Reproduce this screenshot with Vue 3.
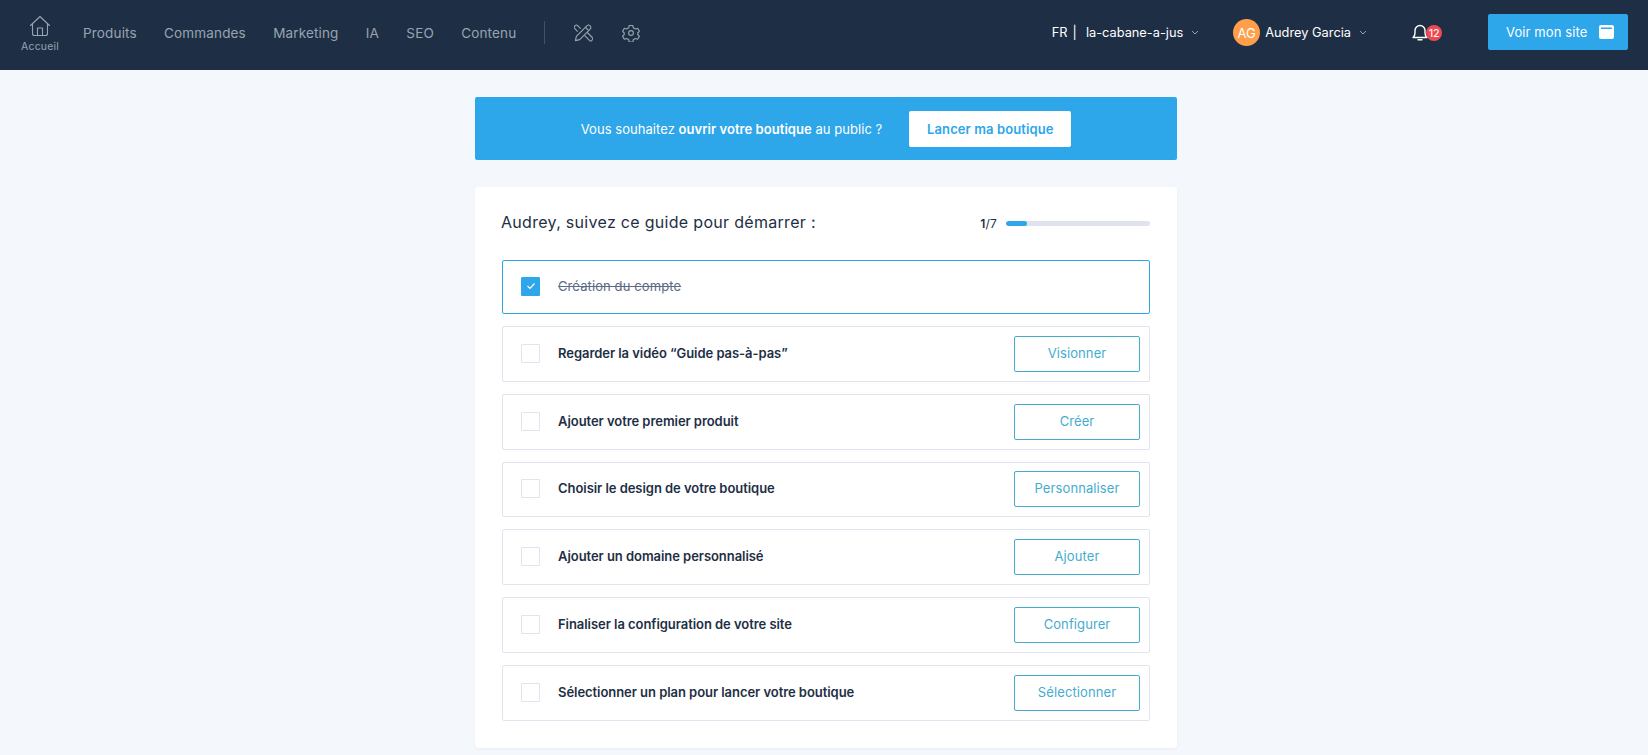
<script setup>
const navLinks = ['Produits', 'Commandes', 'Marketing', 'IA', 'SEO', 'Contenu']

const steps = [
  { label: 'Regarder la vidéo “Guide pas-à-pas”', action: 'Visionner' },
  { label: 'Ajouter votre premier produit', action: 'Créer' },
  { label: 'Choisir le design de votre boutique', action: 'Personnaliser' },
  { label: 'Ajouter un domaine personnalisé', action: 'Ajouter' },
  { label: 'Finaliser la configuration de votre site', action: 'Configurer' },
  { label: 'Sélectionner un plan pour lancer votre boutique', action: 'Sélectionner' }
]
</script>

<template>
  <div class="page">
    <header class="topbar">
      <div class="nav-left">
        <a class="home">
          <svg width="22" height="22" viewBox="0 0 22 22" fill="none" stroke="currentColor" stroke-width="1.1" stroke-linejoin="round" stroke-linecap="round">
            <path d="M1.5 10.5 11 1.5l9.5 9" />
            <path d="M3.5 9v9.5a2 2 0 0 0 2 2h11a2 2 0 0 0 2-2V9" />
            <path d="M8.5 20.5V13h5v7.5" />
          </svg>
          <span>Accueil</span>
        </a>
        <a v-for="link in navLinks" :key="link" class="nav-link">{{ link }}</a>
        <span class="divider"></span>
        <svg class="tool-icon" width="19" height="19" viewBox="0 0 20 20" fill="none" stroke="currentColor" stroke-width="1.2" stroke-linejoin="round">
          <path d="M1.5 18.5l1-4.500L13.500 3a2.400 2.400 0 0 1 3.500 3.500L6 17.500z" />
          <path d="M12 4.500 15.500 8" />
          <path d="M7 6 3.600 2.600a1.400 1.400 0 0 0-2 0l-1 1a1.400 1.400 0 0 0 0 2L4 9" />
          <path d="M11 13l3.500 3.500 2 2a1.400 1.400 0 0 0 2 0l1-1a1.400 1.400 0 0 0 0-2L14 10" />
        </svg>
        <svg class="gear-icon" width="18" height="18" viewBox="0 0 24 24" fill="none" stroke="currentColor" stroke-width="1.5" stroke-linejoin="round">
          <circle cx="12" cy="12" r="3.200" />
          <path d="M9.600 2h4.800l.7 3 2.800 1.600 3-.9 2.300 4.100-2.200 2.200v2l2.200 2.200-2.300 4.100-3-.9-2.800 1.600-.7 3H9.600l-.7-3-2.800-1.600-3 .9-2.300-4.100 2.200-2.200v-2L.8 9.800l2.300-4.100 3 .9 2.800-1.600z" />
        </svg>
      </div>

      <div class="nav-right">
        <div class="shop">
          <span>FR</span>
          <span class="shop-sep">|</span>
          <span>la-cabane-a-jus</span>
          <svg class="chevron" width="8" height="5" viewBox="0 0 8 5" fill="none" stroke="currentColor"><path d="M1 1l3 3 3-3" /></svg>
        </div>
        <div class="user">
          <span class="avatar">AG</span>
          <span>Audrey Garcia</span>
          <svg class="chevron" width="8" height="5" viewBox="0 0 8 5" fill="none" stroke="currentColor"><path d="M1 1l3 3 3-3" /></svg>
        </div>
        <div class="bell">
          <svg width="16" height="17" viewBox="0 0 16 17" fill="none" stroke="#fff" stroke-width="1.4" stroke-linejoin="round">
            <path d="M1 13.500c1.300-1 2-2.200 2-4.500V6.500a5 5 0 0 1 10 0V9c0 2.300.7 3.500 2 4.500z" />
            <path d="M6 15.800h4" stroke-linecap="round" />
          </svg>
          <span class="badge">12</span>
        </div>
        <a class="site-btn">
          Voir mon site
          <svg width="15" height="14" viewBox="0 0 15 14"><path fill="#fff" fill-rule="evenodd" d="M2 0h11a2 2 0 0 1 2 2v10a2 2 0 0 1-2 2H2a2 2 0 0 1-2-2V2a2 2 0 0 1 2-2zm0 2.500V4h11V2.500z" /></svg>
        </a>
      </div>
    </header>

    <main class="content">
      <section class="banner">
        <p>Vous souhaitez <strong>ouvrir votre boutique</strong> au public ?</p>
        <button class="launch">Lancer ma boutique</button>
      </section>

      <section class="card">
        <div class="card-head">
          <h1>Audrey, suivez ce guide pour démarrer :</h1>
          <div class="progress">
            <span class="count"><b>1</b>/7</span>
            <div class="track"><div class="fill" :style="{ width: (100 / 7) + '%' }"></div></div>
          </div>
        </div>

        <div class="steps">
          <div class="step done">
            <span class="check">
              <svg width="10" height="8" viewBox="0 0 10 8" fill="none" stroke="#fff" stroke-width="1.2"><path d="M1.500 4l2.500 2.500 4.500-5" /></svg>
            </span>
            <span class="step-label">Création du compte</span>
          </div>
          <div v-for="step in steps" :key="step.label" class="step">
            <span class="check"></span>
            <span class="step-label">{{ step.label }}</span>
            <button class="action">{{ step.action }}</button>
          </div>
        </div>
      </section>
    </main>
  </div>
</template>

<style>
body {
  margin: 0;
  background: #f4f7fc;
}
</style>

<style scoped>
.page {
  height: 755px;
  overflow: hidden;
  background: #f4f7fc;
  font-family: Inter, "Liberation Sans", sans-serif;
  color: #1e2f45;
}

.topbar {
  height: 70px;
  background: #1e2f45;
  display: flex;
  justify-content: space-between;
  align-items: flex-start;
  padding: 0 20px;
  box-sizing: border-box;
}

.nav-left {
  display: flex;
  align-items: center;
  height: 65px;
  color: #98a3b0;
}

.home {
  display: flex;
  flex-direction: column;
  align-items: center;
  gap: 3px;
  font-size: 10.5px;
  letter-spacing: 0.2px;
  margin: 0 24px 0 1px;
  padding-top: 2px;
}

.nav-link {
  font-size: 13.5px;
  letter-spacing: 0.15px;
  margin-right: 27.3px;
}

.divider {
  width: 1px;
  height: 23px;
  background: #3c5563;
  margin: 0 29px 0 0;
}

.tool-icon {
  margin-right: 29px;
}

.nav-right {
  display: flex;
  align-items: center;
  height: 65px;
  color: #fff;
  font-size: 12.8px;
  letter-spacing: 0;
}

.shop {
  display: flex;
  align-items: center;
  margin-right: 34px;
}

.shop-sep {
  margin: 0 9px 0 5px;
}

.chevron {
  margin-left: 8px;
  color: #98a3b0;
}

.user {
  display: flex;
  align-items: center;
  margin-right: 45px;
}

.avatar {
  width: 27px;
  height: 27px;
  border-radius: 50%;
  background: #ff9f4a;
  display: flex;
  align-items: center;
  justify-content: center;
  margin-right: 5px;
  font-size: 13px;
  letter-spacing: 0;
}

.bell {
  display: flex;
  align-items: center;
  margin-right: 46px;
}

.badge {
  width: 16px;
  height: 16px;
  border-radius: 50%;
  background: #ee4a54;
  margin-left: -2px;
  font-size: 11px;
  letter-spacing: -0.3px;
  display: flex;
  align-items: center;
  justify-content: center;
}

.site-btn {
  width: 140px;
  height: 36px;
  margin-top: -1px;
  background: #2da6ea;
  border-radius: 2px;
  box-sizing: border-box;
  padding: 0 14px 0 18px;
  display: flex;
  align-items: center;
  justify-content: space-between;
  font-size: 13px;
  letter-spacing: 0.1px;
}

.content {
  width: 702px;
  margin: 27px auto 0;
  padding-left: 4px;
}

.banner {
  height: 63px;
  background: #2da6ea;
  border-radius: 2px;
  display: flex;
  align-items: center;
  justify-content: center;
  gap: 27px;
  color: #fff;
  font-size: 13px;
  letter-spacing: 0.05px;
}

.banner p {
  margin: 0;
}

.banner strong {
  font-weight: 600;
}

.launch {
  width: 162px;
  height: 36px;
  border: none;
  border-radius: 2px;
  background: #fff;
  color: #2da6ea;
  font-family: inherit;
  font-size: 13px;
  font-weight: 600;
  letter-spacing: 0.1px;
}

.card {
  margin-top: 27px;
  background: #fff;
  border-radius: 3px;
  height: 561px;
  box-sizing: border-box;
  padding: 27px 27px 0;
  box-shadow: 0 1px 3px rgba(30, 47, 69, 0.05);
}

.card-head {
  display: flex;
  justify-content: space-between;
  align-items: center;
  height: 18px;
  margin-bottom: 28px;
}

h1 {
  margin: -2px 0 0 -1px;
  font-size: 16px;
  font-weight: 400;
  letter-spacing: 0.3px;
}

.progress {
  display: flex;
  align-items: center;
  gap: 9px;
}

.count {
  font-size: 12px;
  letter-spacing: 0.2px;
}

.count b {
  font-weight: 600;
}

.track {
  width: 144px;
  height: 5px;
  border-radius: 3px;
  background: #dfe3ee;
  overflow: hidden;
}

.fill {
  height: 100%;
  background: #2da6ea;
  border-radius: 3px;
}

.steps {
  display: flex;
  flex-direction: column;
  gap: 12px;
}

.step {
  height: 55.8px;
  box-sizing: border-box;
  border: 1px solid #e1e4ef;
  border-radius: 2px;
  display: flex;
  align-items: center;
  padding: 0 9px 0 18px;
}

.step.done {
  height: 54px;
  border-color: #2da6ea;
}

.check {
  width: 19px;
  height: 19px;
  box-sizing: border-box;
  border: 1px solid #e1e4ef;
  border-radius: 1px;
  margin: 0 18px 1px 0;
  display: flex;
  align-items: center;
  justify-content: center;
}

.done .check {
  margin-bottom: 2px;
  background: #2da6ea;
  border-color: #2da6ea;
}

.step-label {
  flex: 1;
  margin-bottom: 2px;
  font-size: 13px;
  font-weight: 600;
  letter-spacing: -0.05px;
}

.done .step-label {
  font-weight: 400;
  letter-spacing: 0.1px;
  color: #5d6a85;
  text-decoration: line-through;
}

.action {
  width: 126px;
  height: 36px;
  padding: 0 0 2px;
  background: #fff;
  border: 1px solid #45acce;
  border-radius: 2px;
  color: #45acce;
  font-family: inherit;
  font-size: 13px;
  letter-spacing: 0.1px;
}
</style>
